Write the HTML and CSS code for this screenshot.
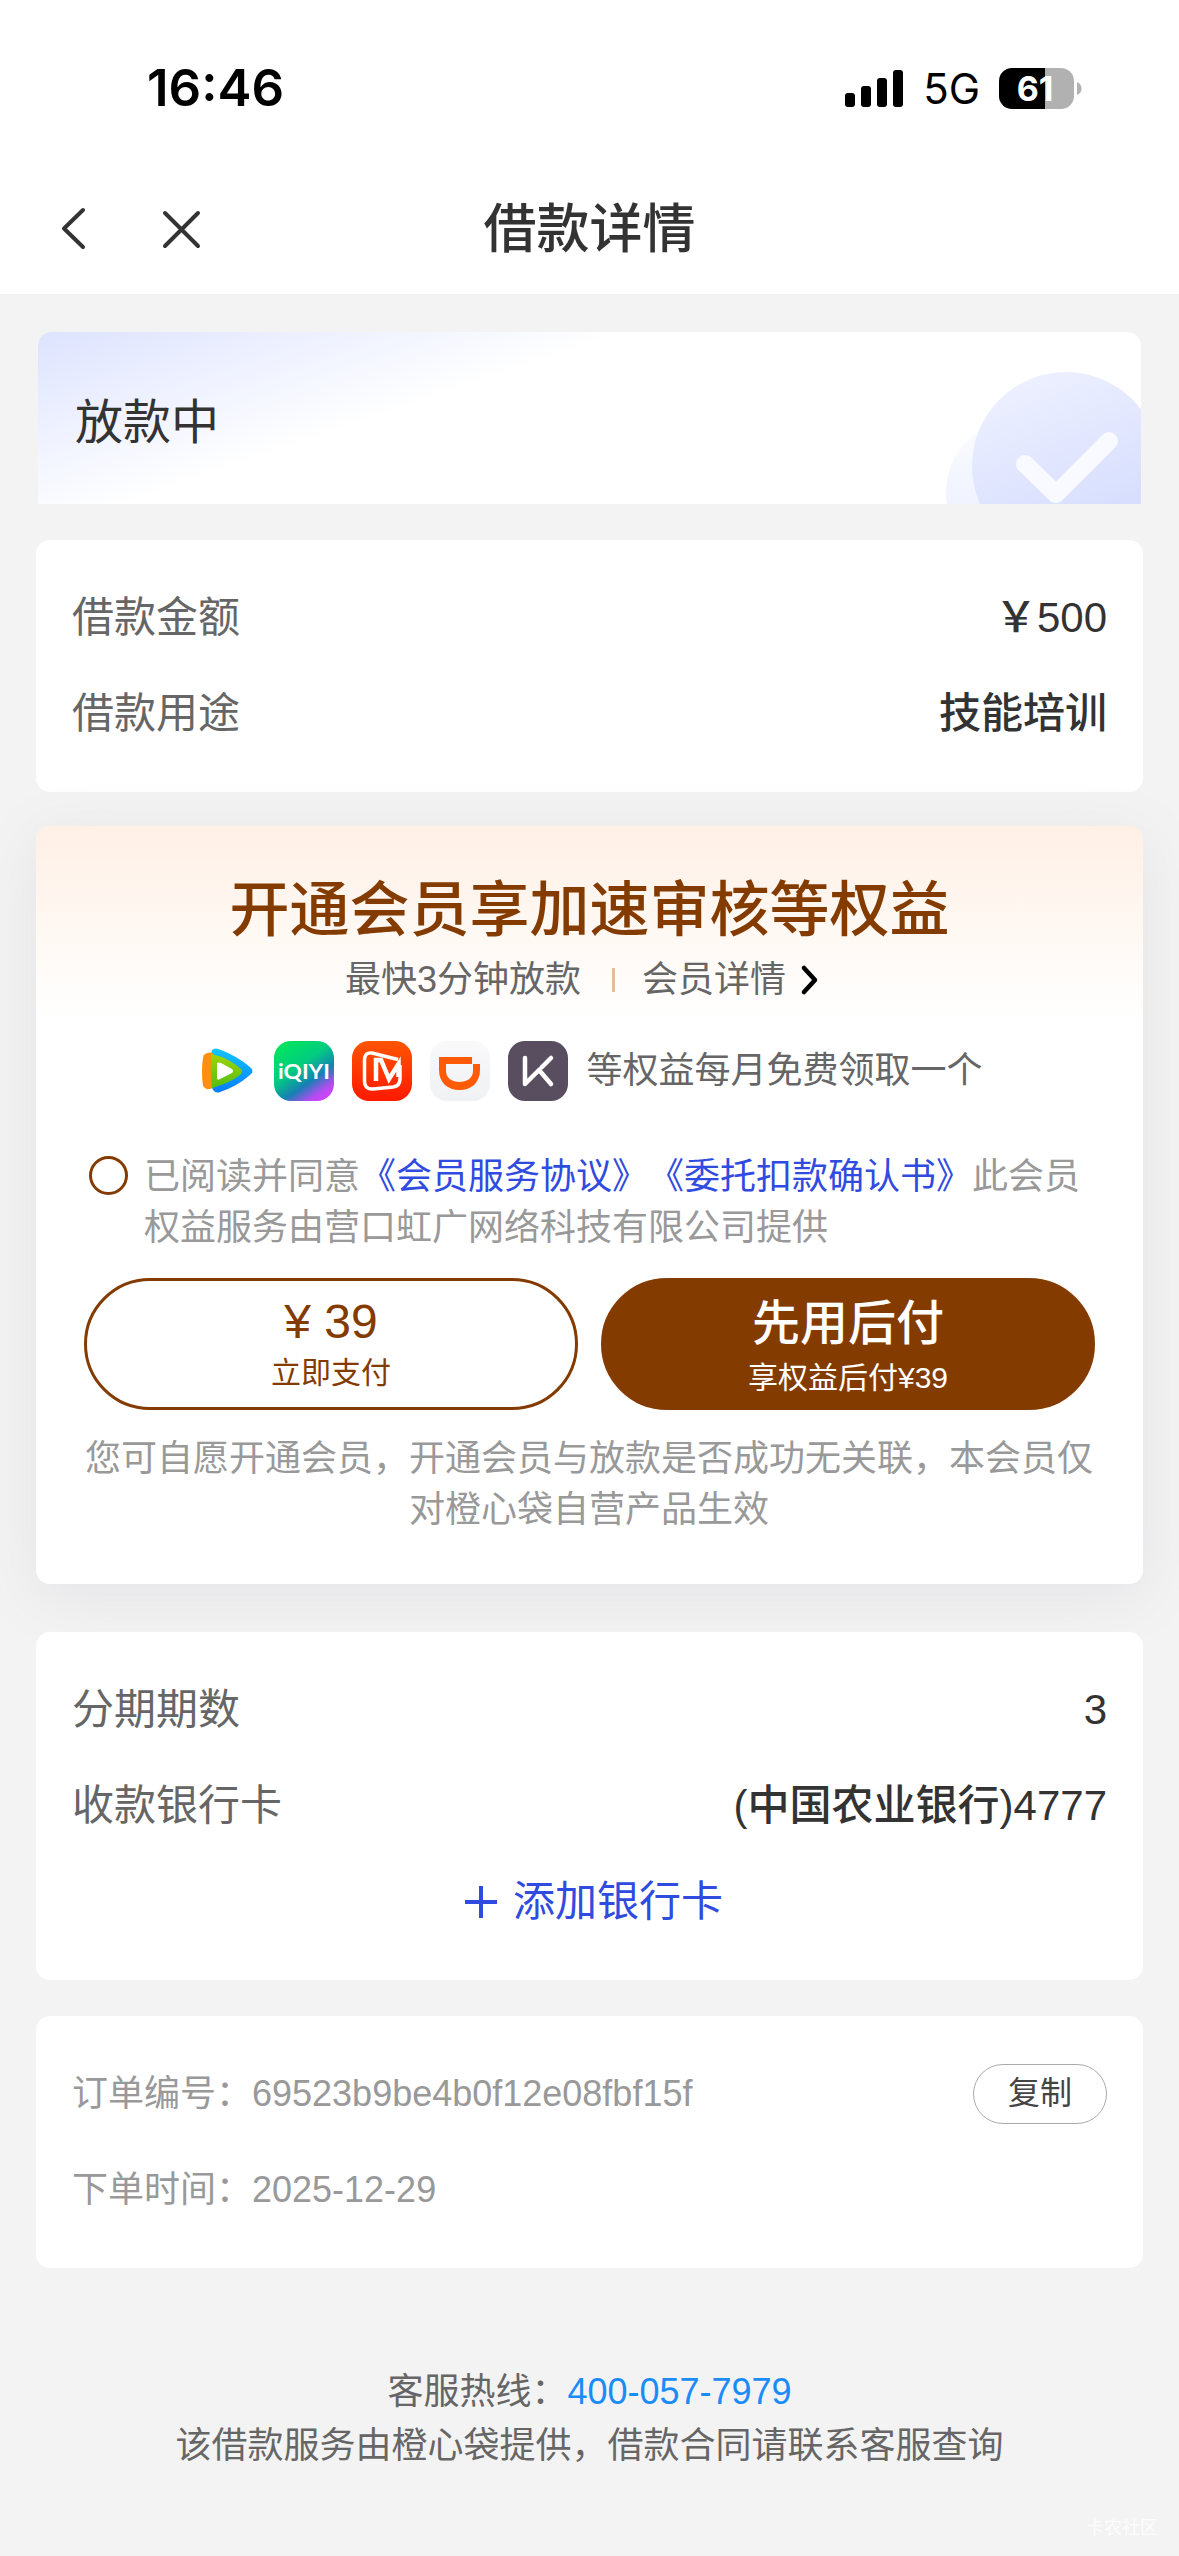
FILE: index.html
```html
<!DOCTYPE html>
<html lang="zh-CN">
<head>
<meta charset="utf-8">
<title>借款详情</title>
<link rel="stylesheet" href="styles.css">
</head>
<body>
<header class="top">
  <div class="status">
    <span class="clock">16:46</span>
    <div class="status-right">
      <svg class="signal" width="58" height="37" viewBox="0 0 58 37"><rect x="0" y="23" width="10" height="14" rx="3"/><rect x="16" y="16" width="10" height="21" rx="3"/><rect x="32" y="8" width="10" height="29" rx="3"/><rect x="48" y="0" width="10" height="37" rx="3"/></svg>
      <span class="network">5G</span>
      <div class="battery"><span class="battery-level">61</span></div>
      <svg class="battery-tip" width="5" height="13" viewBox="0 0 5 13"><path d="M0 0Q4.500 2 4.500 6.500T0 13Z" fill="#b1b1b1"/></svg>
    </div>
  </div>
  <nav class="nav">
    <svg class="nav-back" width="30" height="48" viewBox="0 0 30 48"><path d="M25 5L6 23.500L25 42"/></svg>
    <svg class="nav-close" width="44" height="48" viewBox="0 0 44 48"><path d="M6 8L39 41M39 8L6 41"/></svg>
    <h1 class="nav-title">借款详情</h1>
  </nav>
</header>
<main class="page">
  <section class="banner">
    <span>放款中</span>
    <svg class="banner-art" width="205" height="172" viewBox="0 0 205 172">
      <defs><linearGradient id="disc" x1=".2" y1="0" x2=".6" y2="1"><stop offset="0" stop-color="#eef1ff"/><stop offset=".8" stop-color="#d8dffe"/></linearGradient>
      <linearGradient id="halo" x1="0" y1="0" x2="0" y2="1"><stop offset="0" stop-color="#fbfcff"/><stop offset="1" stop-color="#e9edff"/></linearGradient></defs>
      <circle cx="82" cy="160" r="72" fill="url(#halo)"/>
      <circle cx="130" cy="134" r="94" fill="url(#disc)"/>
      <path d="M89 132L120 162L173 109" fill="none" stroke="#f8faff" stroke-width="18" stroke-linecap="round" stroke-linejoin="round"/>
    </svg>
  </section>

  <section class="card loan">
    <div class="row"><span class="label">借款金额</span><span class="value">￥500</span></div>
    <div class="row"><span class="label">借款用途</span><span class="value">技能培训</span></div>
  </section>

  <section class="card member">
    <h2 class="member-title">开通会员享加速审核等权益</h2>
    <div class="member-sub"><span>最快3分钟放款</span><i class="divider"></i><span>会员详情</span>
      <svg class="more" width="22" height="34" viewBox="0 0 22 34"><path d="M5 5L16 17L5 29"/></svg>
    </div>
    <div class="perks">
      <svg class="perk" viewBox="0 0 60 60">
        <defs><linearGradient id="tb" x1="0" y1="0" x2="0" y2="1"><stop offset="0" stop-color="#13c6ff"/><stop offset="1" stop-color="#087cff"/></linearGradient>
        <linearGradient id="tg" x1="0" y1="0" x2="0" y2="1"><stop offset="0" stop-color="#a2d408"/><stop offset="1" stop-color="#51be13"/></linearGradient></defs>
        <path d="M16 9Q19 6 25 9Q41 15 54 26Q59 30 54 34Q40 46 24 51Q19 53 16 47Q10 30 16 9Z" fill="url(#tb)"/>
        <path d="M9 13Q14 10 18 13Q20 30 17 47Q10 50 7 45Q5 30 7 17Q7 14 9 13Z" fill="#ff8f0d"/>
        <path d="M15 13L26 16Q37 21 44 27Q48 30 44 34Q34 42 16 47Q14 30 15 13Z" fill="url(#tg)"/>
        <path d="M21 22Q22 21 25 22L36 28Q38 30 36 32L24 38Q21 40 21 37Z" fill="#fff"/>
      </svg>
      <svg class="perk" viewBox="0 0 60 60">
        <defs><linearGradient id="iq" x1=".2" y1="0" x2=".9" y2="1"><stop offset="0" stop-color="#00e45e"/><stop offset=".38" stop-color="#02cc80"/><stop offset=".64" stop-color="#1680b4"/><stop offset=".84" stop-color="#b44cf1"/><stop offset="1" stop-color="#dc40ff"/></linearGradient></defs>
        <rect width="60" height="60" rx="17" fill="url(#iq)"/>
        <text class="iqiyi" x="4" y="38" textLength="52" lengthAdjust="spacingAndGlyphs">iQIYI</text>
      </svg>
      <svg class="perk" viewBox="0 0 60 60">
        <defs><linearGradient id="mg" x1="0" y1="0" x2="0" y2="1"><stop offset="0" stop-color="#ff5500"/><stop offset="1" stop-color="#ff1900"/></linearGradient></defs>
        <rect width="60" height="60" rx="17" fill="url(#mg)"/>
        <path d="M46 18.500L20 12Q12.500 11 12.500 19V40Q12.500 48.500 21 48L41 46Q48 45 48 38V24" fill="none" stroke="#fff" stroke-width="3.500"/>
        <path d="M24 40V19H29L37 38L46.500 23V36" fill="none" stroke="#fff" stroke-width="4.500"/>
      </svg>
      <svg class="perk" viewBox="0 0 60 60">
        <defs><linearGradient id="dd" x1="0" y1="0" x2="0" y2="1"><stop offset="0" stop-color="#f9f9fa"/><stop offset="1" stop-color="#f0f1f4"/></linearGradient></defs>
        <rect width="60" height="60" rx="17" fill="url(#dd)"/>
        <path d="M9 16H42V23H50V29C50 42 41 49 29.500 49S9 42 9 29ZM16 23V30C16 37 22 41 29.500 41S43 37 43 30V23Z" fill="#ff5a05" fill-rule="evenodd"/>
      </svg>
      <svg class="perk" viewBox="0 0 60 60">
        <rect width="60" height="60" rx="17" fill="#594d60"/>
        <path d="M17 17V43L31 29L43 43M43 17L33.500 26.500" fill="none" stroke="#fff" stroke-width="4.500" stroke-linecap="round" stroke-linejoin="round"/>
      </svg>
      <span class="perks-text">等权益每月免费领取一个</span>
    </div>
    <div class="agree">
      <i class="radio"></i>
      <p class="agree-text">已阅读并同意<a class="doc">《会员服务协议》</a><a class="doc">《委托扣款确认书》</a>此会员权益服务由营口虹广网络科技有限公司提供</p>
    </div>
    <div class="actions">
      <button class="btn btn-line"><span class="btn-main">¥ 39</span><span class="btn-sub">立即支付</span></button>
      <button class="btn btn-fill"><span class="btn-main">先用后付</span><span class="btn-sub">享权益后付¥39</span></button>
    </div>
    <p class="note">您可自愿开通会员，开通会员与放款是否成功无关联，本会员仅对橙心袋自营产品生效</p>
  </section>

  <section class="card bank">
    <div class="row"><span class="label">分期期数</span><span class="value">3</span></div>
    <div class="row"><span class="label">收款银行卡</span><span class="value">(中国农业银行)4777</span></div>
    <div class="row add"><svg width="34" height="34" viewBox="0 0 34 34"><path d="M1 17H33M17 1V33"/></svg><span>添加银行卡</span></div>
  </section>

  <section class="card order">
    <div class="row"><span>订单编号：69523b9be4b0f12e08fbf15f</span><button class="copy">复制</button></div>
    <div class="row"><span>下单时间：2025-12-29</span></div>
  </section>

  <footer class="footer">
    <p>客服热线：<a class="tel">400-057-7979</a></p>
    <p>该借款服务由橙心袋提供，借款合同请联系客服查询</p>
  </footer>
</main>
<span class="watermark">卡农社区</span>
</body>
</html>
```
FILE: styles.css
```css
* { box-sizing: border-box; margin: 0; padding: 0; }

body {
  position: relative;
  width: 1179px;
  height: 2556px;
  overflow: hidden;
  background: #f3f3f3;
  color: #333;
  font-family: "Liberation Sans", "Noto Sans CJK SC", sans-serif;
  text-spacing-trim: space-all;
}

button { font-family: inherit; background: none; border: 0; }
svg { display: block; flex: none; }

/* status bar and navigation */
.top { height: 294px; background: #fff; }
.status { height: 164px; padding: 48px 97px 0 147px; display: flex; justify-content: space-between; color: #000; font-family: Inter, sans-serif; }
.clock { height: 80px; line-height: 80px; font-size: 51px; font-weight: 600; }
.status-right { display: flex; align-items: center; height: 80px; }
.network { margin: 0 19px 0 20px; font-size: 42px; line-height: 80px; padding-top: 2px; }
.battery { width: 75px; height: 41px; border-radius: 13px; background: linear-gradient(90deg, #000 46px, #b1b1b1 46px); color: #fff; text-align: center; }
.battery-level { display: block; padding-right: 3px; font-size: 34px; line-height: 41px; font-weight: 700; }
.battery-tip { margin-left: 3px; }

.nav { position: relative; height: 130px; padding: 0 58px; display: flex; align-items: center; }
.nav svg { fill: none; stroke: #333; stroke-width: 4; stroke-linecap: round; stroke-linejoin: round; }
.nav-close { margin-left: 71px; }
.nav-title { position: absolute; inset: 0; text-align: center; font-size: 53px; line-height: 132px; font-weight: 500; }

.page { padding: 38px 36px 0; }

/* state banner */
.banner { display: flex; justify-content: space-between; align-items: center; height: 172px; margin: 0 2px 36px; padding-left: 37px; overflow: hidden; border-radius: 14px 14px 0 0; background: linear-gradient(161deg, #dde3ff 0, #fff 192px) #fff; font-size: 48px; }

/* cards */
.card { border-radius: 14px; background: #fff; padding: 0 36px; }
.row { height: 96px; display: flex; align-items: center; justify-content: space-between; font-size: 42px; line-height: 96px; white-space: nowrap; }
.label { color: #666; }
.value { font-weight: 500; }
.loan { height: 252px; padding-top: 30px; margin-bottom: 34px; }

/* membership */
.member { height: 758px; margin-bottom: 48px; padding-top: 45px; background: linear-gradient(#fff0e5 0, #fff 195px); box-shadow: 0 12px 60px rgba(120, 125, 150, .12); }
.member-title { height: 81px; line-height: 80px; text-align: center; color: #843b00; font-size: 60px; font-weight: 500; }
.member-sub { height: 56px; padding-right: 13px; display: flex; justify-content: center; align-items: center; color: #666; font-size: 36px; line-height: 58px; }
.divider { width: 3px; height: 24px; margin: 0 27px 0 31px; background: #dfbd9d; }
.more { margin-left: 13px; fill: none; stroke: #000; stroke-width: 4.500; stroke-linecap: round; stroke-linejoin: round; }
.perks { height: 62px; margin-top: 32px; display: flex; justify-content: center; align-items: center; gap: 18px; color: #666; font-size: 36px; line-height: 60px; }
.perk { width: 60px; height: 60px; }
.iqiyi { font: 700 21px Lato, sans-serif; fill: #fff; }
.agree { display: flex; margin: 49px 0 0 17px; color: #999; font-size: 36px; line-height: 51px; }
.radio { flex: none; width: 39px; height: 39px; margin: 5px 16px 0 0; border: 3px solid #843b00; border-radius: 50%; }
.agree-text { width: 950px; }
.doc { color: #304be0; }
.actions { display: flex; justify-content: space-between; margin: 25px 12px 0; }
.btn { width: 494px; height: 132px; border-radius: 66px; display: flex; flex-direction: column; align-items: center; border: 3px solid #843b00; color: #843b00; }
.btn-main { height: 56px; margin-top: 13px; font-size: 48px; line-height: 56px; }
.btn-sub { height: 40px; margin-top: 3px; font-size: 30px; line-height: 40px; }
.btn-fill { background: #843b00; color: #fff; }
.btn-fill .btn-main { margin-top: 15px; font-weight: 500; }
.btn-fill .btn-sub { margin-top: 6px; }
.note { width: 1012px; margin: 23px auto 0 11px; text-align: center; color: #999; font-size: 36px; line-height: 51px; }

/* bank */
.bank { height: 348px; padding-top: 30px; margin-bottom: 36px; }
.add { justify-content: center; gap: 15px; padding-left: 8px; color: #304be0; }
.add svg { fill: none; stroke: #304be0; stroke-width: 4; }

/* order */
.order { height: 252px; padding-top: 30px; color: #999; }
.order .row { font-size: 36px; }
.copy { width: 134px; height: 60px; padding-bottom: 2px; border: 1px solid #aaa; border-radius: 30px; color: #444; font-size: 32px; line-height: 56px; }

.footer { margin-top: 97px; text-align: center; color: #666; font-size: 36px; line-height: 54px; }
.tel { color: #1a8cf8; }
.watermark { position: absolute; right: 21px; bottom: 17px; font-size: 18px; color: rgba(255, 255, 255, .8); }
```
